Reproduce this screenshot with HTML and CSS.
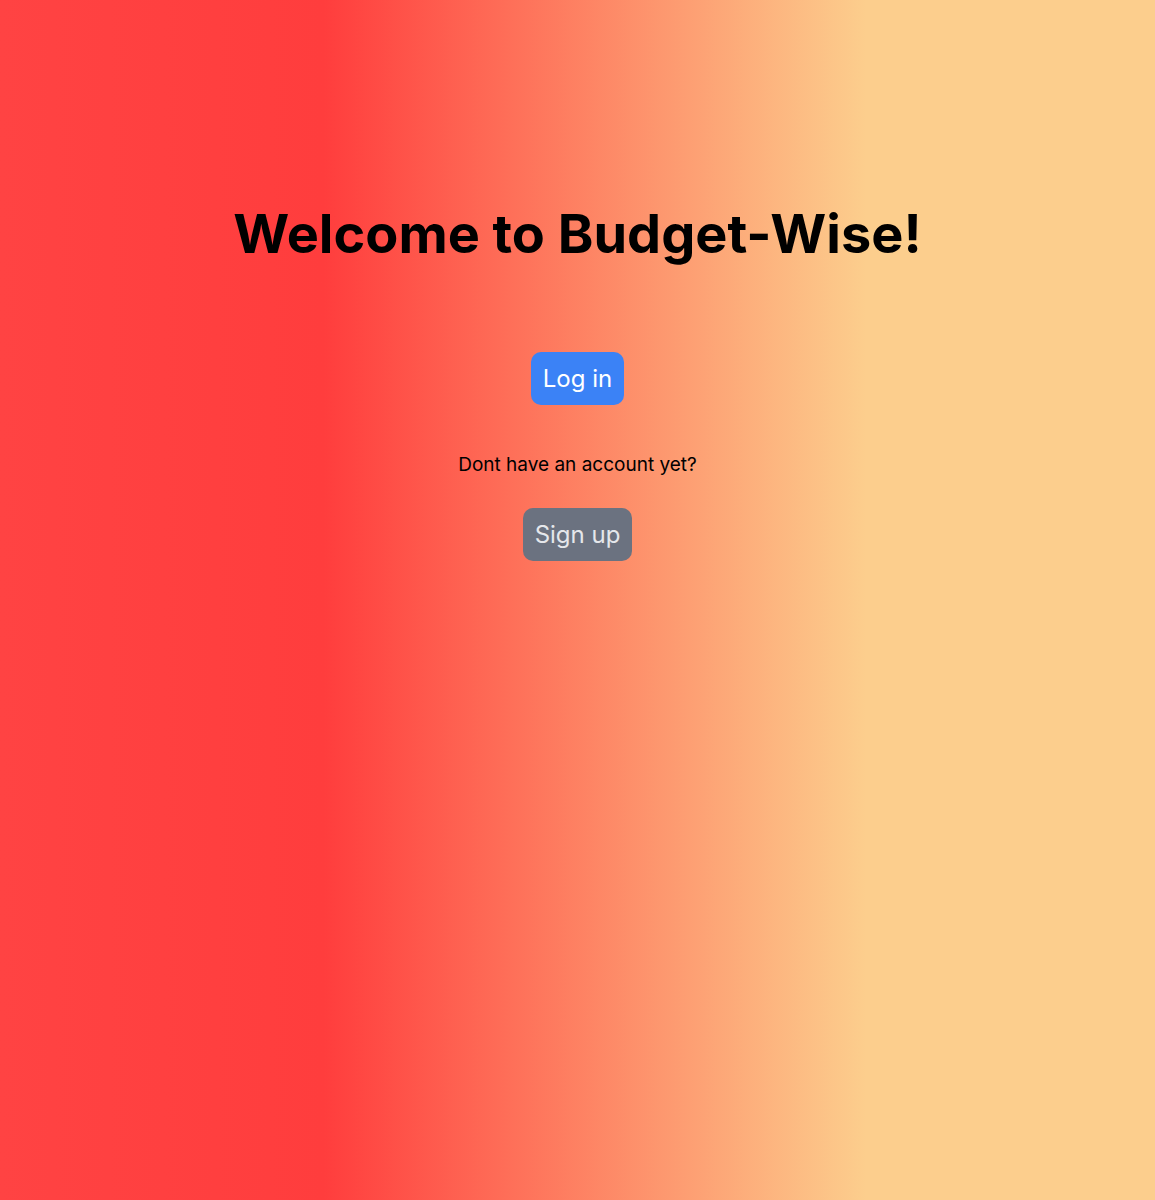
FILE: index.html
```html
<!DOCTYPE html>
<html lang="en">
<head>
<meta charset="utf-8">
<title>Budget-Wise</title>
<link rel="stylesheet" href="styles.css">
</head>
<body>
<main class="page">
  <h1 class="title">Welcome to Budget-Wise!</h1>
  <button class="btn btn-login">Log in</button>
  <p class="prompt">Dont have an account yet?</p>
  <button class="btn btn-signup">Sign up</button>
</main>
</body>
</html>
```

FILE: styles.css
```css
html, body {
  margin: 0;
  padding: 0;
  height: 100%;
}
body {
  font-family: Inter, "Noto Sans", sans-serif;
  background: linear-gradient(to right, #ff4343 0%, #ff3d3d 28%, #fcce8d 75%, #fcce8d 100%);
  min-height: 1200px;
}
.page {
  display: flex;
  flex-direction: column;
  align-items: center;
  padding-top: 207px;
}
.title {
  margin: 0;
  font-size: 54px;
  line-height: 54px;
  font-weight: 700;
  color: #000;
}
.btn {
  font-family: Inter, "Noto Sans", sans-serif;
  font-size: 24px;
  line-height: 33px;
  padding: 10px 12px;
  border: none;
  border-radius: 10px;
  cursor: pointer;
}
.btn-login {
  margin-top: 91px;
  background: #3b82f6;
  color: #fff;
}
.btn-signup {
  background: #6b7280;
  color: #e5e7eb;
}
.prompt {
  margin: 46px 0 29px;
  font-size: 19px;
  line-height: 28px;
  color: #000;
}
```
